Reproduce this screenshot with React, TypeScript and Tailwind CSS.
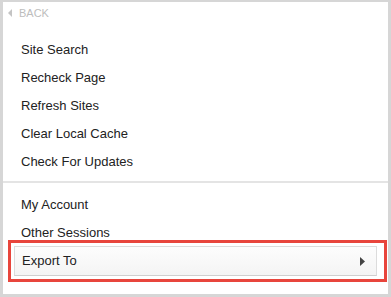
const topItems = ["Site Search", "Recheck Page", "Refresh Sites", "Clear Local Cache", "Check For Updates"];
const bottomItems = ["My Account", "Other Sessions"];

export default function App() {
  return (
    <div
      className="w-[391px] h-[297px] bg-[#d6d6d6] pt-[2px] pl-[3px] pr-[3px] pb-[3px]"
      style={{ fontFamily: '"Liberation Sans", Arial, sans-serif' }}
    >
      <div className="h-full bg-white flex flex-col">
        {/* back link */}
        <div className="h-[22px] flex items-center pl-[5px] gap-[7px] text-[#bdbdbd] text-[11px]">
          <svg width="4" height="8" viewBox="0 0 4 8">
            <path d="M4 0 L0 4 L4 8 Z" fill="#c4c4c4" />
          </svg>
          <span>BACK</span>
        </div>

        <div className="mt-[12px] flex flex-col">
          {topItems.map((label) => (
            <div key={label} className="h-[28px] flex items-center pl-[18px] text-[13px] text-[#222]">
              {label}
            </div>
          ))}
        </div>

        <div className="mt-[5px] h-[2px] bg-[#e4e4e4]" />

        <div className="mt-[8px] flex flex-col">
          {bottomItems.map((label) => (
            <div key={label} className="h-[28px] flex items-center pl-[18px] text-[13px] text-[#222]">
              {label}
            </div>
          ))}
        </div>

        {/* highlighted export row */}
        <div className="ml-[5px] mr-[1px] -mt-[7px] border-[3px] border-[#e8453c] pt-[3px] pb-[3px] pl-[3px] pr-[7px]">
          <div className="h-[30px] flex items-center justify-between pl-[7px] pr-[11px] border border-[#dcdcdc] border-b-[#cfcfcf] bg-gradient-to-b from-[#fdfdfd] to-[#f4f4f4] text-[13px] text-[#222]">
            <span>Export To</span>
            <svg width="5" height="9" viewBox="0 0 5 9">
              <path d="M0 0 L5 4.5 L0 9 Z" fill="#444" />
            </svg>
          </div>
        </div>
      </div>
    </div>
  );
}
